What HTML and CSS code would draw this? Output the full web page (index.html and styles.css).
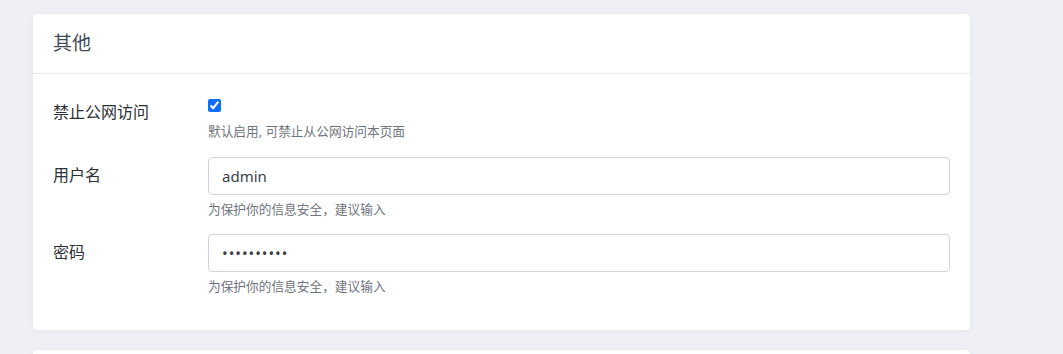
FILE: index.html
```html
<!DOCTYPE html>
<html lang="zh-CN">
<head>
    <meta charset="UTF-8">
    <meta name="viewport" content="width=device-width, initial-scale=1.0">
    <title>设置</title>
    <link rel="stylesheet" href="styles.css">
</head>
<body>
    <div class="page">
        <!-- 其他设置 -->
        <div class="card">
            <div class="card-header">其他</div>
            <div class="card-body">
                <div class="form-row first">
                    <label class="form-label" for="deny-public">禁止公网访问</label>
                    <div class="form-field check-field">
                        <input type="checkbox" id="deny-public" checked>
                        <p class="help">默认启用, 可禁止从公网访问本页面</p>
                    </div>
                </div>
                <div class="form-row">
                    <label class="form-label" for="username">用户名</label>
                    <div class="form-field">
                        <input type="text" id="username" class="input" value="admin">
                        <p class="help">为保护你的信息安全，建议输入</p>
                    </div>
                </div>
                <div class="form-row">
                    <label class="form-label" for="password">密码</label>
                    <div class="form-field">
                        <input type="password" id="password" class="input secret" value="1234567890">
                        <p class="help">为保护你的信息安全，建议输入</p>
                    </div>
                </div>
            </div>
        </div>

        <div class="card next"></div>
    </div>
</body>
</html>
```

FILE: styles.css
```css
body {
    margin: 0;
    font-family: "Noto Sans", "Noto Sans CJK SC", sans-serif;
    background-color: #eff0f5;
}

.page {
    width: 937px;
    padding: 14px 0 0 33px;
}

.card {
    background-color: #ffffff;
    border-radius: 4px;
    box-shadow: 0 1px 8px rgba(30, 40, 80, 0.05);
}

.card.next {
    margin-top: 20px;
    height: 40px;
}

.card-header {
    height: 59px;
    line-height: 59px;
    padding: 0 20px;
    font-size: 19px;
    color: #404a58;
    border-bottom: 1px solid #e9eaee;
}

.card-body {
    padding: 20px 20px 19px;
}

.form-row {
    display: grid;
    grid-template-columns: 155px 1fr;
    margin-bottom: 16px;
}

.form-row.first {
    margin-bottom: 17px;
}

.form-label {
    padding-top: 7px;
    font-size: 16px;
    line-height: 22px;
    color: #2b2f36;
}

.check-field {
    padding-top: 5px;
}

.check-field input {
    display: block;
    width: 13px;
    height: 13px;
    margin: 0;
    accent-color: #0d6efd;
}

.check-field .help {
    margin-top: 10px;
}

.input {
    display: block;
    box-sizing: border-box;
    width: 100%;
    height: 38px;
    padding: 0 13px;
    font-family: "Noto Sans", "Noto Sans CJK SC", sans-serif;
    font-size: 15px;
    color: #3a3f47;
    border: 1px solid #d0d3d9;
    border-radius: 4px;
    background-color: #ffffff;
    outline: none;
}

.input.secret {
    letter-spacing: 1px;
}

.help {
    margin: 5px 0 0;
    font-size: 12.7px;
    line-height: 18px;
    color: #6f7580;
}
```
